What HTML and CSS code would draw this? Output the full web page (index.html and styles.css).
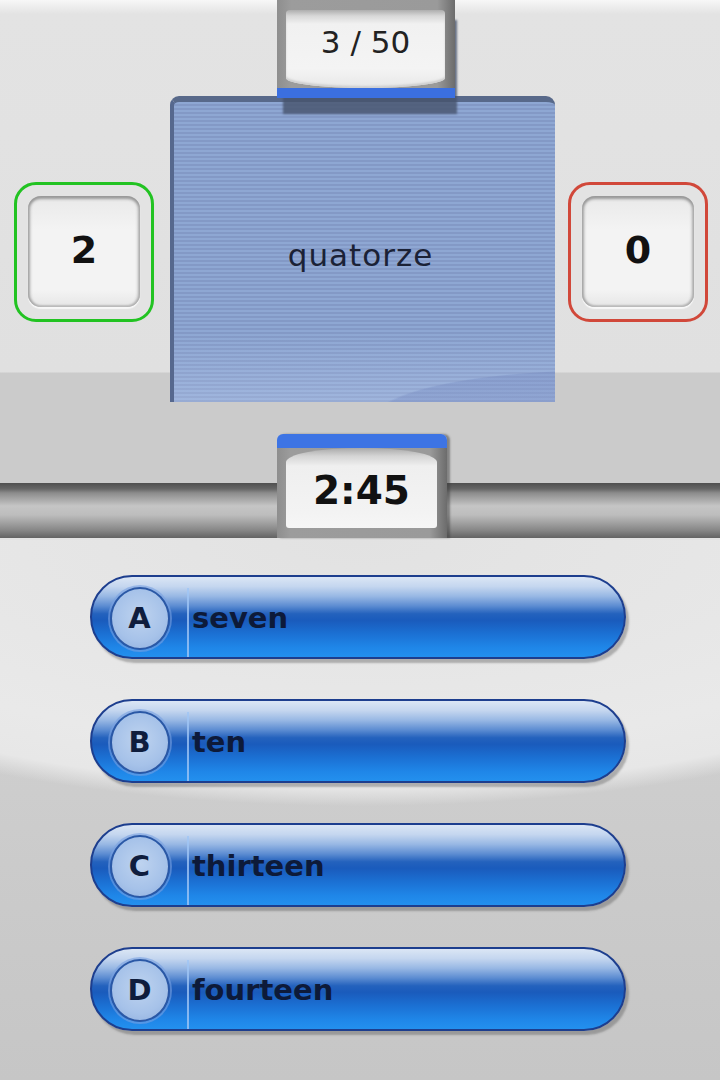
FILE: index.html
```html
<!DOCTYPE html>
<html>
<head>
<meta charset="utf-8">
<link rel="stylesheet" href="styles.css">
</head>
<body>
<div class="screen">
  <section class="top">
    <div class="score score-ok"><div class="score-face">2</div></div>
    <div class="center">
      <div class="tab tab-counter"><div class="tab-face">3 / 50</div></div>
      <div class="card"><span class="word">quatorze</span></div>
      <div class="tab tab-timer"><div class="tab-face">2:45</div></div>
    </div>
    <div class="score score-bad"><div class="score-face">0</div></div>
  </section>
  <section class="answers">
    <div class="answer"><div class="cap"><span class="letter">A</span></div><div class="label">seven</div></div>
    <div class="answer"><div class="cap"><span class="letter">B</span></div><div class="label">ten</div></div>
    <div class="answer"><div class="cap"><span class="letter">C</span></div><div class="label">thirteen</div></div>
    <div class="answer"><div class="cap"><span class="letter">D</span></div><div class="label">fourteen</div></div>
  </section>
</div>
</body>
</html>
```
FILE: styles.css
```css
* { box-sizing: border-box; }
html, body { margin: 0; padding: 0; }
body {
  width: 720px;
  height: 1080px;
  overflow: hidden;
  font-family: "DejaVu Sans", "Verdana", sans-serif;
  background: #d0d0d0;
}
.screen { width: 720px; height: 1080px; display: flex; flex-direction: column; }

/* ---------- top screen ---------- */
.top {
  height: 540px;
  display: flex;
  align-items: flex-start;
  padding-left: 14px;
  background: linear-gradient(to bottom,
    #f7f7f7 0, #e3e3e3 14px, #e0e0e0 372px,
    #cbcbcb 373px, #cbcbcb 483px,
    #4f4f4f 483px, #666 489px, #8c8c8c 493px, #c5c5c5 506px,
    #bdbdbd 515px, #8b8b8b 529px, #626262 538px,
    #e2e2e2 538px, #e2e2e2 540px);
}
.score {
  width: 140px;
  height: 140px;
  margin-top: 182px;
  border: 3px solid #22c322;
  border-radius: 22px;
  padding: 11px;
  background: #e3e3e3;
}
.score-bad { border-color: #d1483a; margin-left: 13px; }
.score-face {
  width: 112px;
  height: 111px;
  border-radius: 13px;
  background: linear-gradient(#e9e9e9, #f3f3f3 30%, #f3f3f3 85%, #e6e6e6);
  box-shadow: inset 0 4px 3px -1px #989898, inset 3px 0 3px -1px #a4a4a4,
              inset -3px 0 3px -1px #acacac, inset 0 -2px 2px #c0c0c0,
              0 2px 1px #f8f8f8;
  display: flex;
  align-items: center;
  justify-content: center;
  font-weight: bold;
  font-size: 38px;
  color: #111;
  padding-bottom: 4px;
}
.center {
  width: 385px;
  margin-left: 16px;
  display: flex;
  flex-direction: column;
}
.tab { position: relative; z-index: 2; }
.tab-counter {
  width: 178px;
  height: 98px;
  margin-left: 107px;
  padding: 10px 10px 0 9px;
  background: linear-gradient(90deg, #8e8e8e, #9c9c9c 8%, #9a9a9a 90%, #6c6c6c);
  border-bottom: 10px solid #3b6fe0;
  box-shadow: 4px 18px 2px -2px rgba(70, 82, 108, 0.8);
}
.tab-counter .tab-face {
  height: 78px;
  border-radius: 4px 4px 50% 50% / 4px 4px 10px 10px;
  background: linear-gradient(#aeaeae 0, #d8d8d8 6px, #f1f1f1 14px, #f4f4f4 75%, #e8e8e8 100%);
  box-shadow: inset 0 -2px 2px #cfcfcf;
  display: flex;
  align-items: center;
  justify-content: center;
  padding-bottom: 14px;
  font-size: 31px;
  color: #222;
}
.card {
  height: 306px;
  margin-top: -2px;
  border-radius: 9px 9px 0 0;
  border-top: 6px solid #58698a;
  border-left: 4px solid #56688e;
  background:
    radial-gradient(ellipse 230px 50px at 427px 318px, rgba(105, 125, 185, 0.28) 0, rgba(105, 125, 185, 0.28) 98%, rgba(105, 125, 185, 0) 100%),
    linear-gradient(to bottom, rgba(200, 215, 245, 0) 230px, rgba(200, 215, 245, 0.3) 300px),
    repeating-linear-gradient(to bottom, #8ea7d3 0, #8ea7d3 2px, #8399c6 2px, #8399c6 4px);
  display: flex;
  align-items: center;
  justify-content: center;
  padding-top: 6px;
  padding-right: 8px;
}
.word {
  font-size: 31px;
  letter-spacing: 1px;
  color: #1b2236;
}
.tab-timer {
  width: 170px;
  height: 104px;
  margin-top: 32px;
  margin-left: 107px;
  padding: 0 10px 10px 9px;
  border-top: 14px solid #3d74e4;
  border-radius: 6px 6px 0 0;
  background: linear-gradient(90deg, #8e8e8e, #9c9c9c 8%, #9a9a9a 90%, #6c6c6c);
  box-shadow: 3px 0 2px rgba(60, 60, 60, 0.5);
}
.tab-timer .tab-face {
  height: 80px;
  border-radius: 50% 50% 3px 3px / 14px 14px 3px 3px;
  background: linear-gradient(#a9a9a9 0, #d4d4d4 8px, #efefef 18px, #f3f3f3 80%, #f6f6f6 100%);
  display: flex;
  align-items: center;
  justify-content: center;
  padding-top: 4px;
  font-size: 39px;
  font-weight: bold;
  color: #111;
}

/* ---------- bottom screen ---------- */
.answers {
  height: 540px;
  display: flex;
  flex-direction: column;
  gap: 40px;
  padding: 35px 0 0 90px;
  background:
    radial-gradient(ellipse 760px 266px at 50% 0, #e2e2e2 0, #e9e9e9 78%, #e7e7e7 93%, rgba(225, 225, 225, 0) 100%),
    linear-gradient(#d4d4d4, #cbcbcb 60%, #c6c6c6);
}
.answer {
  width: 536px;
  height: 84px;
  border: 2px solid #1d3e8e;
  border-radius: 42px;
  display: flex;
  background: linear-gradient(to bottom,
    #dbe6f5 0, #c4d6ef 12%, #98b8e4 24%, #5d8dd2 36%, #2462bd 46%,
    #1a5bbc 54%, #1b6fd2 70%, #1f86e8 88%, #2390ee 100%);
  box-shadow: 3px 4px 2px rgba(70, 70, 70, 0.35);
}
.cap {
  width: 95px;
  flex: none;
  display: flex;
  align-items: center;
  justify-content: center;
  padding-top: 2px;
}
.letter {
  width: 60px;
  height: 63px;
  border-radius: 50%;
  border: 2px solid #2a58a6;
  background: radial-gradient(circle at 50% 45%, #bed3ef 0, #a6c2e9 60%, #8cacdd 100%);
  box-shadow: 0 0 0 2px rgba(120, 160, 225, 0.6);
  display: flex;
  align-items: center;
  justify-content: center;
  font-weight: bold;
  font-size: 29px;
  color: #0f1d3d;
}
.label {
  flex: 1;
  margin-top: 11px;
  border-left: 2px solid rgba(160, 198, 245, 0.8);
  padding-left: 3px;
  padding-bottom: 9px;
  display: flex;
  align-items: center;
  font-weight: bold;
  font-size: 29px;
  color: #0d1a39;
}
```
